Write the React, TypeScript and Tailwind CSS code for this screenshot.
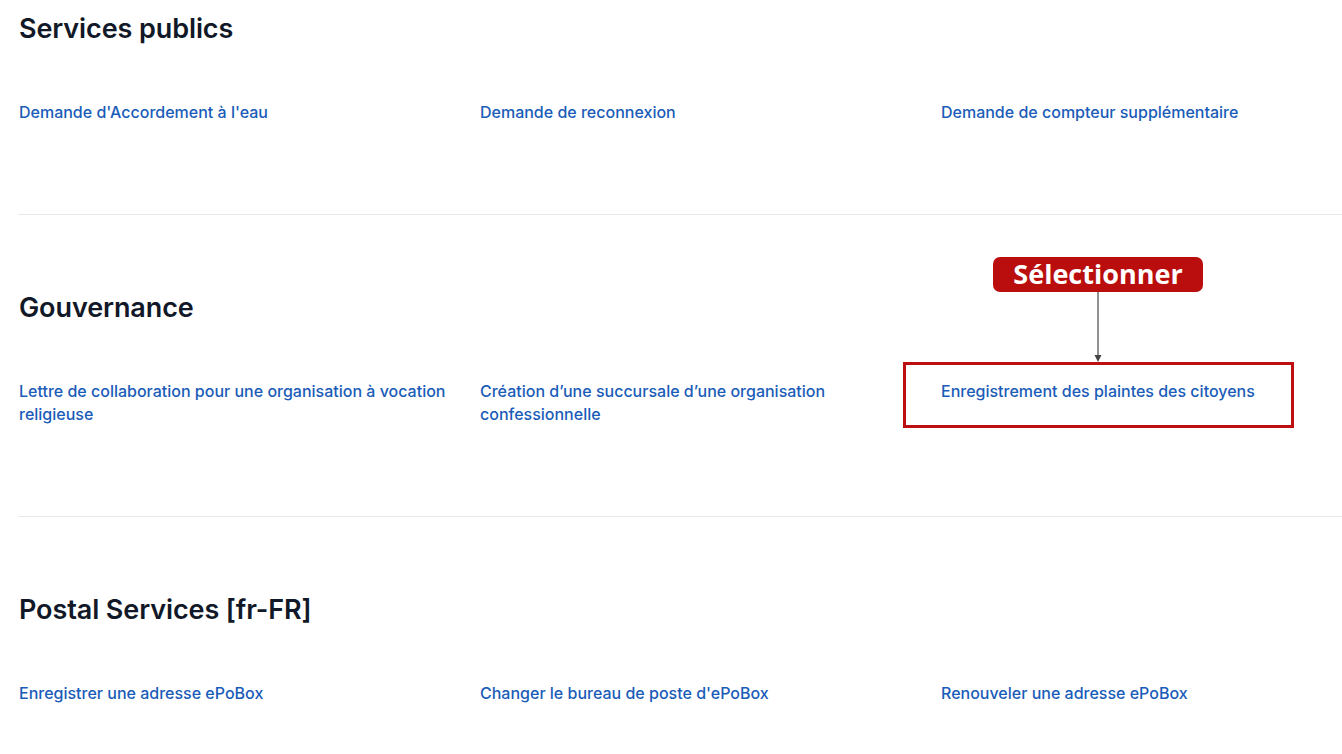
import React from "react";

const sections = [
  {
    title: "Services publics",
    links: [
      "Demande d'Accordement à l'eau",
      "Demande de reconnexion",
      "Demande de compteur supplémentaire",
    ],
  },
  {
    title: "Gouvernance",
    links: [
      "Lettre de collaboration pour une organisation à vocation religieuse",
      "Création d’une succursale d’une organisation confessionnelle",
      "Enregistrement des plaintes des citoyens",
    ],
  },
  {
    title: "Postal Services [fr-FR]",
    links: [
      "Enregistrer une adresse ePoBox",
      "Changer le bureau de poste d'ePoBox",
      "Renouveler une adresse ePoBox",
    ],
  },
];

export default function App() {
  return (
    <div
      className="relative w-[1342px] h-[754px] overflow-hidden bg-white"
      style={{ fontFamily: "Inter, 'Noto Sans', sans-serif" }}
    >
      <div className="pl-[19px] w-[1420px]">
        {sections.map((s, i) => (
          <div key={s.title}>
            {i > 0 && <div className="h-px bg-[#e6e8ec] -ml-px" />}
            <div className={i === 0 ? "pt-[11px] pb-[90px]" : "pt-[75px] pb-[90px]"}>
              <h2 className="text-[27px] leading-[36px] font-semibold tracking-[-0.1px] text-[#111827]">
                {s.title}
              </h2>
              <div
                className={
                  (i === 0 ? "mt-[54px]" : "mt-[54px]") +
                  " grid grid-cols-[437px_437px_437px] gap-x-[24px]"
                }
              >
                {s.links.map((l) => (
                  <a
                    key={l}
                    className="text-[16px] leading-[23px] font-medium text-[#1a5cb8]"
                  >
                    {l}
                  </a>
                ))}
              </div>
            </div>
          </div>
        ))}
      </div>

      {/* annotation */}
      <div className="absolute left-[903px] top-[362px] w-[391px] h-[66px] border-[3px] border-[#bd0f0f]" />
      <div className="absolute left-[993px] top-[257px] w-[210px] h-[35px] rounded-[7px] bg-[#ba0e0e] flex items-center justify-center">
        <span
          className="text-white text-[27px] font-bold leading-none -mt-[2px]"
          style={{ fontFamily: "'Open Sans', sans-serif" }}
        >
          Sélectionner
        </span>
      </div>
      <svg className="absolute left-[1093px] top-[292px]" width="10" height="71" viewBox="0 0 10 71">
        <line x1="5" y1="0" x2="5" y2="64" stroke="#555" strokeWidth="1.3" />
        <path d="M1.5 63 L8.5 63 L5 70 Z" fill="#444" />
      </svg>
    </div>
  );
}
